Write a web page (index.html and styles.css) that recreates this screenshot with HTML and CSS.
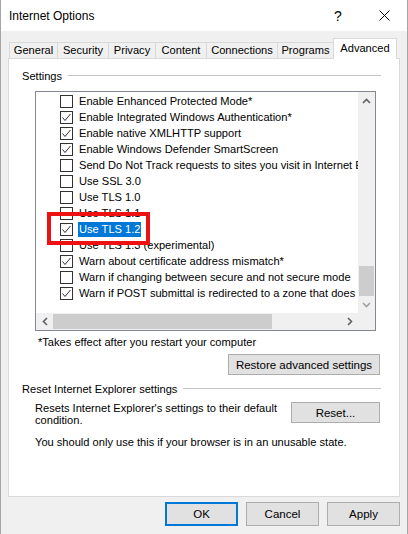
FILE: index.html
```html
<!DOCTYPE html>
<html>
<head>
<meta charset="utf-8">
<link rel="stylesheet" href="styles.css">
</head>
<body>
<div class="window">
  <div class="titlebar">
    <span class="title">Internet Options</span>
    <span class="cap-btn help">?</span>
    <span class="cap-btn close"><svg width="11" height="11" viewBox="0 0 11 11"><path d="M0.5 0.5L10.5 10.5M10.5 0.5L0.5 10.5" stroke="#000" stroke-width="1"/></svg></span>
  </div>
  <div class="body">
    <div class="tabs">
      <div class="tab t-general">General</div>
      <div class="tab t-security">Security</div>
      <div class="tab t-privacy">Privacy</div>
      <div class="tab t-content">Content</div>
      <div class="tab t-connections">Connections</div>
      <div class="tab t-programs">Programs</div>
      <div class="tab t-advanced active">Advanced</div>
    </div>
    <div class="panel">
      <div class="group-head"><span>Settings</span><i class="rule"></i></div>
      <div class="listbox">
        <div class="items">
          <div class="row"><span class="cb"></span><span class="lbl">Enable Enhanced Protected Mode*</span></div>
          <div class="row"><span class="cb on"><svg width="11" height="11" viewBox="0 0 11 11"><path d="M1.5 5.5L4 8.5L9.5 2" fill="none" stroke="#333" stroke-width="1"/></svg></span><span class="lbl">Enable Integrated Windows Authentication*</span></div>
          <div class="row"><span class="cb on"><svg width="11" height="11" viewBox="0 0 11 11"><path d="M1.5 5.5L4 8.5L9.5 2" fill="none" stroke="#333" stroke-width="1"/></svg></span><span class="lbl">Enable native XMLHTTP support</span></div>
          <div class="row"><span class="cb on"><svg width="11" height="11" viewBox="0 0 11 11"><path d="M1.5 5.5L4 8.5L9.5 2" fill="none" stroke="#333" stroke-width="1"/></svg></span><span class="lbl">Enable Windows Defender SmartScreen</span></div>
          <div class="row"><span class="cb"></span><span class="lbl">Send Do Not Track requests to sites you visit in Internet Explorer*</span></div>
          <div class="row"><span class="cb"></span><span class="lbl">Use SSL 3.0</span></div>
          <div class="row"><span class="cb"></span><span class="lbl">Use TLS 1.0</span></div>
          <div class="row"><span class="cb"></span><span class="lbl">Use TLS 1.1</span></div>
          <div class="row"><span class="cb on"><svg width="11" height="11" viewBox="0 0 11 11"><path d="M1.5 5.5L4 8.5L9.5 2" fill="none" stroke="#333" stroke-width="1"/></svg></span><span class="lbl sel">Use TLS 1.2</span></div>
          <div class="row"><span class="cb"></span><span class="lbl">Use TLS 1.3 (experimental)</span></div>
          <div class="row"><span class="cb on"><svg width="11" height="11" viewBox="0 0 11 11"><path d="M1.5 5.5L4 8.5L9.5 2" fill="none" stroke="#333" stroke-width="1"/></svg></span><span class="lbl">Warn about certificate address mismatch*</span></div>
          <div class="row"><span class="cb"></span><span class="lbl">Warn if changing between secure and not secure mode</span></div>
          <div class="row"><span class="cb on"><svg width="11" height="11" viewBox="0 0 11 11"><path d="M1.5 5.5L4 8.5L9.5 2" fill="none" stroke="#333" stroke-width="1"/></svg></span><span class="lbl">Warn if POST submittal is redirected to a zone that does not permit posts</span></div>
        </div>
        <div class="vscroll">
          <div class="sbtn"><svg width="9" height="6" viewBox="0 0 9 6"><path d="M1 5L4.5 1.5L8 5" fill="none" stroke="#606060" stroke-width="1.6"/></svg></div>
          <div class="vtrack"><div class="vthumb"></div></div>
          <div class="sbtn"><svg width="9" height="6" viewBox="0 0 9 6"><path d="M1 1L4.5 4.5L8 1" fill="none" stroke="#a0a0a0" stroke-width="1.6"/></svg></div>
        </div>
        <div class="hscroll">
          <div class="sbtn"><svg width="6" height="9" viewBox="0 0 6 9"><path d="M5 1L1.5 4.5L5 8" fill="none" stroke="#606060" stroke-width="1.6"/></svg></div>
          <div class="htrack"><div class="hthumb"></div></div>
          <div class="sbtn"><svg width="6" height="9" viewBox="0 0 6 9"><path d="M1 1L4.5 4.5L1 8" fill="none" stroke="#606060" stroke-width="1.6"/></svg></div>
        </div>
        <div class="corner"></div>
        <div class="callout"></div>
      </div>
      <div class="note">*Takes effect after you restart your computer</div>
      <div class="btn-line"><button class="btn restore">Restore advanced settings</button></div>
      <div class="group-head reset-head"><span>Reset Internet Explorer settings</span><i class="rule"></i></div>
      <div class="reset-row">
        <div class="desc">Resets Internet Explorer's settings to their default<br>condition.</div>
        <button class="btn reset">Reset...</button>
      </div>
      <div class="warn">You should only use this if your browser is in an unusable state.</div>
    </div>
    <div class="dlg-buttons">
      <button class="btn dlg default">OK</button>
      <button class="btn dlg">Cancel</button>
      <button class="btn dlg">Apply</button>
    </div>
  </div>
</div>
</body>
</html>
```
FILE: styles.css
```css
html, body {
  margin: 0;
  padding: 0;
}
body {
  width: 408px;
  height: 534px;
  overflow: hidden;
  background: #f0f0f0;
  font-family: "Liberation Sans", Arial, sans-serif;
  font-size: 11.1px;
  color: #000;
}
.window {
  box-sizing: border-box;
  width: 408px;
  height: 534px;
  border-left: 1px solid #a6a6a6;
  border-right: 1px solid #a6a6a6;
  background: #f0f0f0;
}
.titlebar {
  height: 31px;
  background: #fff;
  display: flex;
  align-items: center;
}
.title {
  margin-left: 8px;
  font-size: 12px;
  flex: 1;
}
.cap-btn {
  width: 46px;
  height: 31px;
  display: flex;
  align-items: center;
  justify-content: center;
}
.help {
  font-size: 14px;
}
.body {
  padding: 7px 7px 0 7px;
}
.tabs {
  display: flex;
  align-items: flex-end;
  height: 20px;
  margin-left: 1px;
  position: relative;
  z-index: 1;
}
.tab {
  box-sizing: border-box;
  height: 16px;
  border: 1px solid #d9d9d9;
  border-bottom: none;
  margin-right: -1px;
  background: #f0f0f0;
  text-align: center;
  line-height: 15px;
  white-space: nowrap;
}
.tab.active {
  height: 21px;
  margin-bottom: -1px;
  background: #fff;
  line-height: 19px;
  position: relative;
}
.t-general { width: 49px; }
.t-security { width: 52px; }
.t-privacy { width: 48px; }
.t-content { width: 52px; }
.t-connections { width: 72px; }
.t-programs { width: 57px; }
.t-advanced { width: 64px; }
.panel {
  box-sizing: border-box;
  width: 392px;
  height: 439px;
  background: #fff;
  border: 1px solid #d9d9d9;
  padding: 10px 18px 0 13px;
}
.group-head {
  display: flex;
  align-items: center;
  height: 14px;
  line-height: 14px;
  white-space: nowrap;
}
.group-head .rule {
  flex: 1;
  height: 1px;
  background: #c4c4c4;
  margin-left: 6px;
  margin-top: -1px;
}
.listbox {
  position: relative;
  box-sizing: border-box;
  width: 341px;
  height: 240px;
  margin: 8px 0 0 13px;
  border: 1px solid #828790;
  display: grid;
  grid-template-columns: 322px 17px;
  grid-template-rows: 221px 17px;
}
.items {
  background: #fff;
  overflow: hidden;
  padding-top: 1px;
}
.row {
  height: 16px;
  display: flex;
  align-items: center;
  padding-left: 24px;
  white-space: nowrap;
}
.cb {
  box-sizing: border-box;
  flex: none;
  width: 13px;
  height: 13px;
  border: 1px solid #333;
  background: #fff;
  display: flex;
  align-items: center;
  justify-content: center;
}
.lbl {
  margin-left: 5px;
  padding: 0 1px;
  line-height: 15px;
}
.lbl.sel {
  background: #0078d7;
  color: #fff;
}
.vscroll {
  background: #f0f0f0;
  display: flex;
  flex-direction: column;
}
.sbtn {
  flex: none;
  width: 17px;
  height: 17px;
  display: flex;
  align-items: center;
  justify-content: center;
}
.vtrack {
  flex: 1;
  display: flex;
  flex-direction: column;
  justify-content: flex-end;
}
.vthumb {
  height: 30px;
  margin: 0 1px;
  background: #cdcdcd;
}
.hscroll {
  background: #f0f0f0;
  display: flex;
}
.htrack {
  flex: 1;
  display: flex;
  align-items: stretch;
  padding: 1px 0;
}
.hthumb {
  width: 219px;
  background: #cdcdcd;
}
.corner {
  background: #f0f0f0;
}
.callout {
  position: absolute;
  box-sizing: border-box;
  left: 11px;
  top: 120px;
  width: 103px;
  height: 33px;
  border: 4px solid #ee1111;
}
.note {
  margin: 4px 0 0 16px;
  line-height: 14px;
}
.btn-line {
  display: flex;
  justify-content: flex-end;
  margin: 5px 1px 0 0;
}
.btn {
  box-sizing: border-box;
  font-family: inherit;
  font-size: 11.5px;
  color: #000;
  background: #e1e1e1;
  border: 1px solid #adadad;
  padding: 0;
  margin: 0;
  height: 21px;
}
.restore {
  width: 152px;
}
.reset-head {
  margin-top: 7px;
}
.reset-row {
  display: flex;
  align-items: flex-start;
  margin: 6px 1px 0 13px;
}
.desc {
  flex: 1;
  line-height: 12px;
  white-space: nowrap;
}
.reset {
  width: 89px;
}
.warn {
  margin: 9px 0 0 13px;
  line-height: 14px;
}
.dlg-buttons {
  display: flex;
  justify-content: flex-end;
  gap: 8px;
  margin-top: 5px;
  width: 392px;
}
.btn.dlg {
  width: 73px;
  height: 24px;
}
.btn.dlg.default {
  border: 2px solid #0078d7;
}
```
